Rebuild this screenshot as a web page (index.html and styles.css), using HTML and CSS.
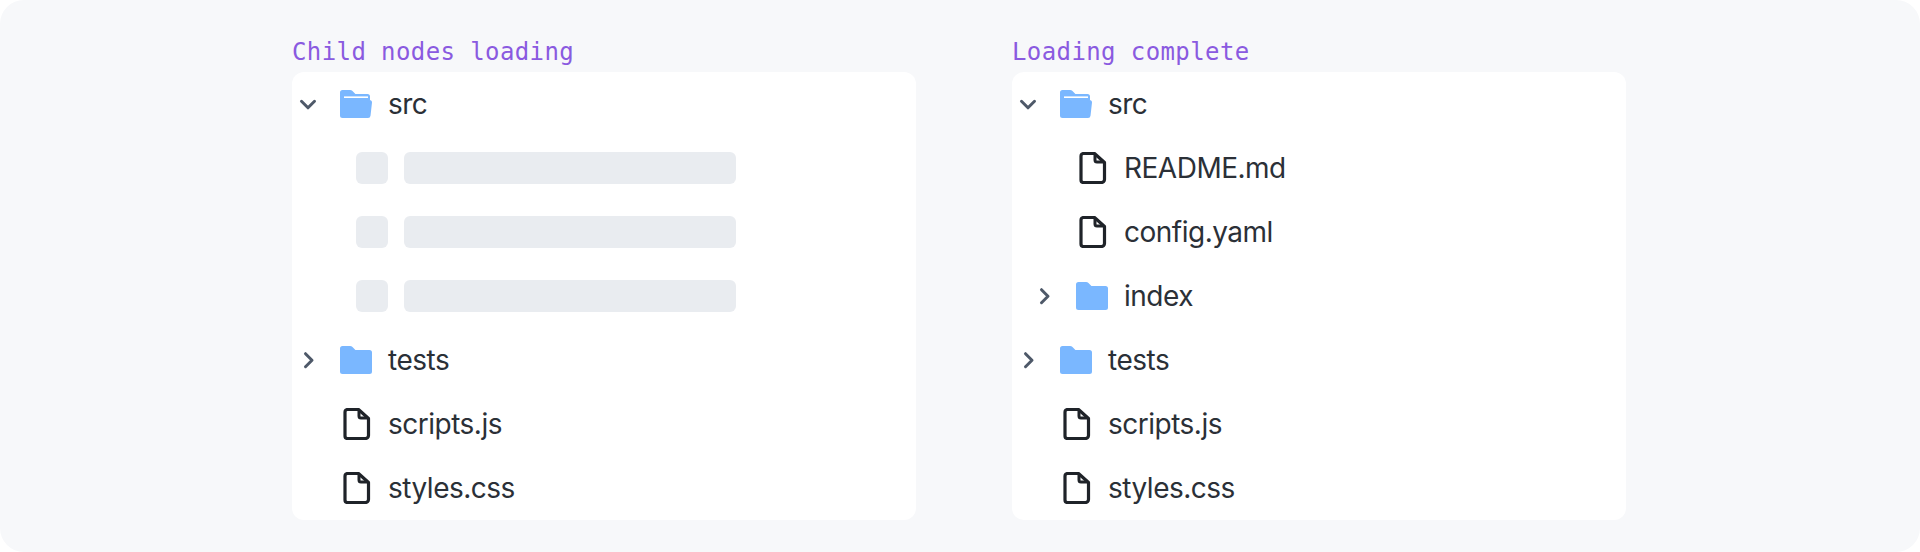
FILE: index.html
```html
<!DOCTYPE html>
<html lang="en">
<head>
<meta charset="utf-8">
<title>Tree loading</title>
<link rel="stylesheet" href="styles.css">
</head>
<body>
<svg class="defs" width="0" height="0" aria-hidden="true">
  <symbol id="chev-down" viewBox="0 0 32 32"><path d="M9.500 13.300 16 19.800l6.500-6.500" fill="none" stroke="currentColor" stroke-width="3" stroke-linecap="round" stroke-linejoin="round"/></symbol>
  <symbol id="chev-right" viewBox="0 0 32 32"><path d="M13.500 9.700 20 16.200l-6.500 6.500" fill="none" stroke="currentColor" stroke-width="3" stroke-linecap="round" stroke-linejoin="round"/></symbol>
  <symbol id="folder" viewBox="0 0 32 32"><path d="M0 4.500A2.500 2.500 0 0 1 2.500 2H10c1 0 1.800.4 2.500 1.100L15.400 6H29.500A2.500 2.500 0 0 1 32 8.500v19a2.500 2.500 0 0 1-2.500 2.500h-27A2.500 2.500 0 0 1 0 27.500z" fill="#7ab7ff"/></symbol>
  <symbol id="folder-open" viewBox="0 0 32 32"><path d="M0 4.500A2.500 2.500 0 0 1 2.500 2H10c1 0 1.800.4 2.500 1.100L15.400 6H27.500A2.500 2.500 0 0 1 30 8.500V12h-.5A2.500 2.500 0 0 1 32 14.500L30.500 27.800A2.500 2.500 0 0 1 28 30H2.500A2.500 2.500 0 0 1 0 27.500z" fill="#7ab7ff"/><path d="M4 9.200h24" stroke="#fff" stroke-width="1.600"/></symbol>
  <symbol id="file" viewBox="0 0 32 32"><path d="M7.500 1.500h11L28.500 10.500v17a3 3 0 0 1-3 3h-18a2.500 2.500 0 0 1-2.500-2.500V4a2.500 2.500 0 0 1 2.500-2.500z" fill="none" stroke="currentColor" stroke-width="3.200" stroke-linejoin="round"/><path d="M19 2v6a2 2 0 0 0 2 2h7" fill="none" stroke="currentColor" stroke-width="3" stroke-linejoin="round"/></symbol>
</svg>
<main class="stage">
  <section class="demo demo-left">
    <h2 class="demo-title">Child nodes loading</h2>
    <div class="tree">
      <div class="row"><svg class="chev"><use href="#chev-down"/></svg><svg class="icon"><use href="#folder-open"/></svg><span class="name">src</span></div>
      <div class="row nested"><span class="skel-icon"></span><span class="skel-bar"></span></div>
      <div class="row nested"><span class="skel-icon"></span><span class="skel-bar"></span></div>
      <div class="row nested"><span class="skel-icon"></span><span class="skel-bar"></span></div>
      <div class="row"><svg class="chev"><use href="#chev-right"/></svg><svg class="icon"><use href="#folder"/></svg><span class="name">tests</span></div>
      <div class="row"><span class="chev"></span><svg class="icon file"><use href="#file"/></svg><span class="name">scripts.js</span></div>
      <div class="row"><span class="chev"></span><svg class="icon file"><use href="#file"/></svg><span class="name">styles.css</span></div>
    </div>
  </section>
  <section class="demo demo-right">
    <h2 class="demo-title">Loading complete</h2>
    <div class="tree">
      <div class="row"><svg class="chev"><use href="#chev-down"/></svg><svg class="icon"><use href="#folder-open"/></svg><span class="name">src</span></div>
      <div class="row nested"><svg class="icon file"><use href="#file"/></svg><span class="name">README.md</span></div>
      <div class="row nested"><svg class="icon file"><use href="#file"/></svg><span class="name">config.yaml</span></div>
      <div class="row indented"><svg class="chev"><use href="#chev-right"/></svg><svg class="icon"><use href="#folder"/></svg><span class="name">index</span></div>
      <div class="row"><svg class="chev"><use href="#chev-right"/></svg><svg class="icon"><use href="#folder"/></svg><span class="name">tests</span></div>
      <div class="row"><span class="chev"></span><svg class="icon file"><use href="#file"/></svg><span class="name">scripts.js</span></div>
      <div class="row"><span class="chev"></span><svg class="icon file"><use href="#file"/></svg><span class="name">styles.css</span></div>
    </div>
  </section>
</main>
</body>
</html>
```
FILE: styles.css
```css
* { box-sizing: border-box; }
html, body { margin: 0; padding: 0; background: #fff; }
.defs { display: block; height: 0; }
.stage {
  height: 552px;
  background: #f7f8fa;
  border-radius: 24px;
  display: flex;
  gap: 96px;
  padding: 32px 0 32px 292px;
  font-family: Inter, "Noto Sans", sans-serif;
}
.demo { display: flex; flex-direction: column; }
.demo-left { width: 624px; }
.demo-right { width: 614px; }
.demo-title {
  margin: 0;
  height: 40px;
  font-family: "DejaVu Sans Mono", "Liberation Mono", monospace;
  font-size: 24px;
  font-weight: 400;
  line-height: 41px;
  letter-spacing: 0.4px;
  color: #8a5ae0;
}
.tree { background: #fff; border-radius: 12px; }
.row {
  height: 64px;
  display: flex;
  align-items: center;
  gap: 16px;
  font-size: 28px;
  letter-spacing: -0.5px;
  color: #2b3037;
}
.nested { padding-left: 64px; }
.indented { padding-left: 16px; }
.chev { width: 32px; height: 32px; flex: none; color: #4e5969; }
.icon { width: 32px; height: 32px; flex: none; }
.file { color: #1f2329; }
.skel-icon { width: 32px; height: 32px; border-radius: 6px; background: #e9ecf0; flex: none; }
.skel-bar { width: 332px; height: 32px; border-radius: 6px; background: #e9ecf0; flex: none; }
```
